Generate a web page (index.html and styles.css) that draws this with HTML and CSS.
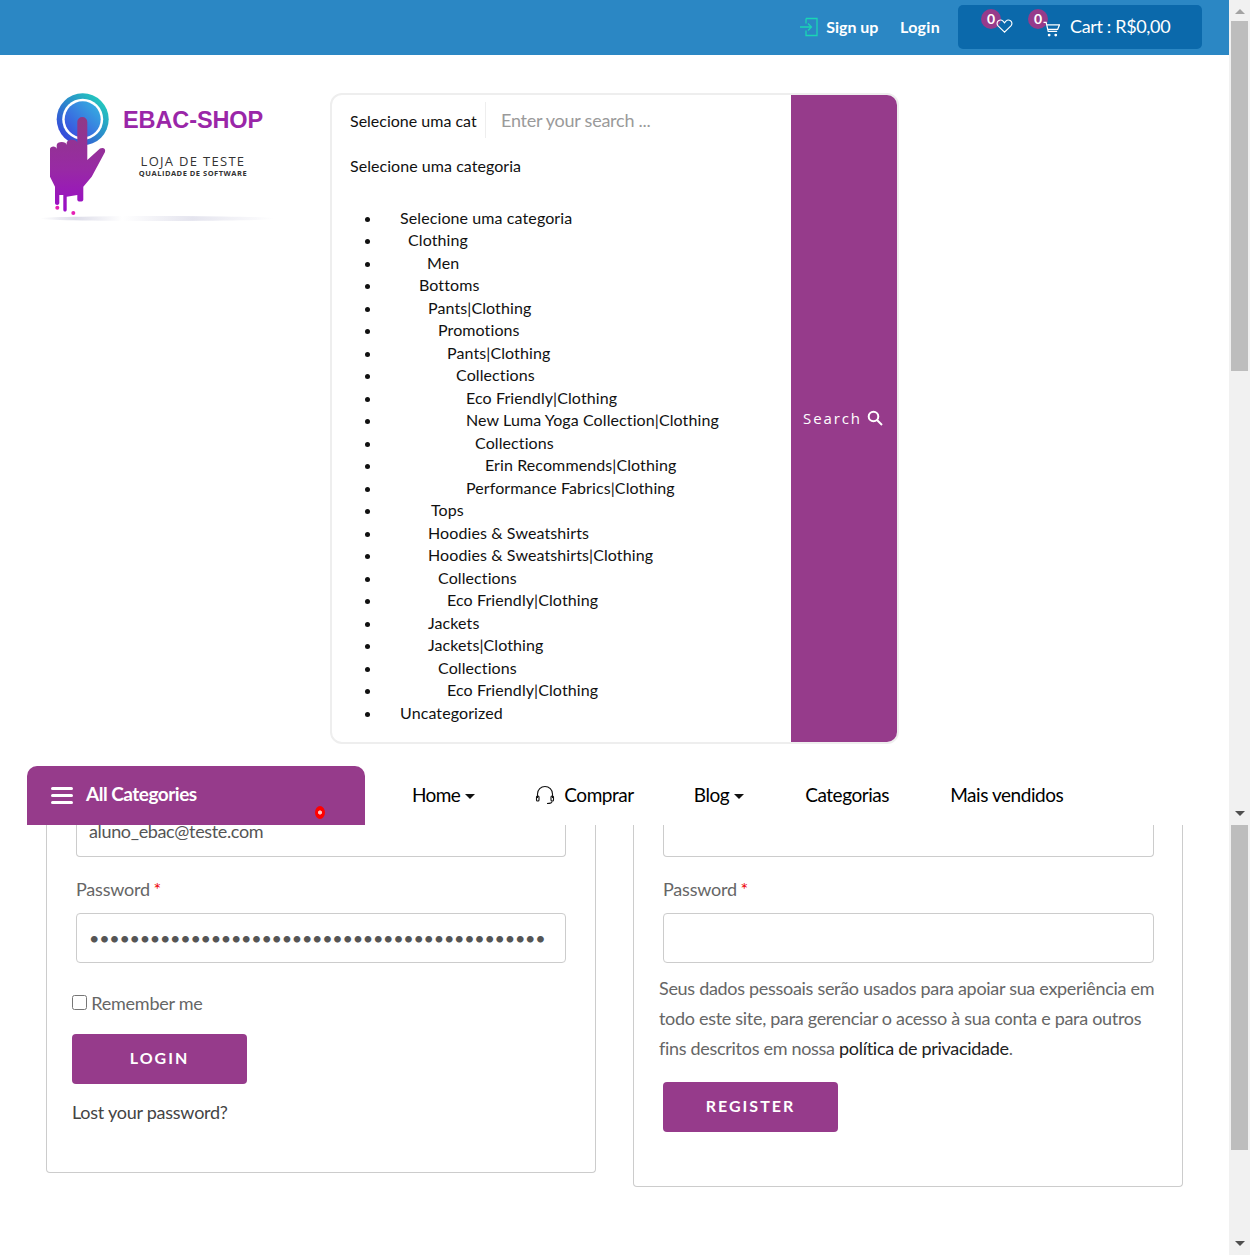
FILE: index.html
```html
<!DOCTYPE html>
<html lang="pt-BR">
<head>
<meta charset="utf-8">
<title>EBAC Shop</title>
<link rel="stylesheet" href="styles.css">
</head>
<body>
<div class="frame">
  <header class="site-header">
    <div class="header-col">
      <div class="topbar">
        <a class="top-link signup">
          <svg class="signup-icon" viewBox="0 0 20 20" width="20" height="20" fill="none" stroke="#1ad6b4" stroke-width="1.3"><path d="M7 1.5h11v17H7v-5M7 6.5v-5M1 10h11M9 6.5l3.5 3.5L9 13.5"/></svg>
          Sign up</a>
        <a class="top-link login">Login</a>
        <div class="cart-box">
          <span class="icon-badge wish">
            <span class="badge">0</span>
            <svg viewBox="0 1 18 15" width="17" height="15" fill="none" stroke="#fff" stroke-width="1.2"><path d="M9 14.5L2.2 7.8C.6 6.1.9 3.6 2.6 2.4 4.3 1.3 6.2 1.6 7.5 2.9L9 4.6 10.5 2.9C11.8 1.6 13.700 1.300 15.400 2.400 17.100 3.600 17.400 6.100 15.800 7.800Z"/></svg>
          </span>
          <span class="icon-badge cart">
            <span class="badge">0</span>
            <svg viewBox="0 0 18 17" width="17" height="16" fill="none" stroke="#fff" stroke-width="1.3"><path d="M.5 1.5h2.8L5.500 11h9.500M4 4h13.500l-2 5H5"/><circle cx="6.500" cy="15" r="1.500" fill="#fff" stroke="none"/><circle cx="13.500" cy="15" r="1.500" fill="#fff" stroke="none"/></svg>
          </span>
          <span class="cart-text">Cart : R$0,00</span>
        </div>
      </div>

      <div class="brand-row">
        <a class="logo">
          <svg class="logo-mark" viewBox="0 0 70 126" width="70" height="126">
            <defs>
              <linearGradient id="ring" x1="0" y1="1" x2="1" y2="0"><stop offset="0" stop-color="#3a2fe0"/><stop offset="1" stop-color="#1fe0b8"/></linearGradient>
              <linearGradient id="disc" x1="0" y1="1" x2="1" y2="0"><stop offset="0" stop-color="#3b45e0"/><stop offset="1" stop-color="#35b8e0"/></linearGradient>
              <linearGradient id="hand" x1="0" y1="0" x2="0" y2="1"><stop offset="0" stop-color="#8f3a85"/><stop offset="0.55" stop-color="#982aa4"/><stop offset="1" stop-color="#9a0cc8"/></linearGradient>
            </defs>
            <circle cx="36.700" cy="26.300" r="26" fill="url(#ring)"/>
            <circle cx="36.700" cy="26.300" r="20.500" fill="#fff"/>
            <circle cx="36.700" cy="26.300" r="18" fill="url(#disc)"/>
            <path d="M31.300 29a5 5 0 0 1 10 0V67L54 55.500c3-1.500 6 0 5 3.500L45.700 83.700 37.300 93.700v13c0 2.500-6 2.500-6 0V102L20.700 103.700v13c0 2.500-3.400 2.500-3.400 0V102h-4v8c0 2.500-4.300 2.500-4.300 0V93.700L4 83.700V56c0-3.500 6.700-3.500 6.700 0V52c0-4 10-4 10 0V50c0-4.500 10.600-4.500 10.600 0Z" fill="url(#hand)"/>
            <circle cx="11.300" cy="114.700" r="2" fill="#e61fb4"/>
            <circle cx="27.300" cy="120" r="2" fill="#e61fb4"/>
          </svg>
          <div class="logo-text">
            <div class="logo-title">EBAC-SHOP</div>
            <div class="logo-sub">LOJA DE TESTE</div>
            <div class="logo-small">QUALIDADE DE SOFTWARE</div>
          </div>
          <span class="logo-shadow"></span>
        </a>

        <form class="search">
          <div class="search-main">
            <div class="search-top">
              <span class="cat-select">Selecione uma cat</span>
              <span class="search-input">Enter your search ...</span>
            </div>
            <div class="cat-current">Selecione uma categoria</div>
            <ul class="cat-list">
              <li><span class="d0">Selecione uma categoria</span></li>
              <li><span class="d1">Clothing</span></li>
              <li><span class="d2">Men</span></li>
              <li><span class="d3">Bottoms</span></li>
              <li><span class="d4">Pants|Clothing</span></li>
              <li><span class="d5">Promotions</span></li>
              <li><span class="d6">Pants|Clothing</span></li>
              <li><span class="d7">Collections</span></li>
              <li><span class="d8">Eco Friendly|Clothing</span></li>
              <li><span class="d8">New Luma Yoga Collection|Clothing</span></li>
              <li><span class="d9">Collections</span></li>
              <li><span class="d10">Erin Recommends|Clothing</span></li>
              <li><span class="d8">Performance Fabrics|Clothing</span></li>
              <li><span class="d3b">Tops</span></li>
              <li><span class="d4">Hoodies &amp; Sweatshirts</span></li>
              <li><span class="d4">Hoodies &amp; Sweatshirts|Clothing</span></li>
              <li><span class="d5">Collections</span></li>
              <li><span class="d6">Eco Friendly|Clothing</span></li>
              <li><span class="d4">Jackets</span></li>
              <li><span class="d4">Jackets|Clothing</span></li>
              <li><span class="d5">Collections</span></li>
              <li><span class="d6">Eco Friendly|Clothing</span></li>
              <li><span class="d0">Uncategorized</span></li>
            </ul>
          </div>
          <button class="search-btn" type="button">Search
            <svg viewBox="0 0 16 16" width="16" height="16" fill="none" stroke="#fff" stroke-width="2"><circle cx="6.500" cy="6.500" r="4.800"/><path d="M10 10l5 5"/></svg>
          </button>
        </form>
      </div>

      <nav class="navbar">
        <a class="all-cats">
          <span class="burger"><i></i><i></i><i></i></span>
          All Categories
          <span class="red-dot"></span>
        </a>
        <ul class="nav-links">
          <li class="home">Home<span class="caret"></span></li>
          <li class="with-icon">
            <svg viewBox="0 0 20 20" width="20" height="20" fill="none" stroke="#111" stroke-width="1.100"><path d="M2.500 13V9a7.500 7.500 0 0 1 15 0v4"/><rect x="1.500" y="11" width="2.500" height="5" rx="1"/><rect x="16" y="11" width="2.500" height="5" rx="1"/><path d="M17 16.500c0 1.500-2 2-5 2"/></svg>
            Comprar</li>
          <li>Blog<span class="caret"></span></li>
          <li>Categorias</li>
          <li>Mais vendidos</li>
        </ul>
      </nav>
    </div>
    <div class="scrollbar">
      <span class="arrow up"></span>
      <span class="thumb thumb-upper"></span>
      <span class="arrow down"></span>
    </div>
  </header>

  <div class="page-body">
    <main class="account">
      <section class="card card-login">
        <div class="field-value email">aluno_ebac@teste.com</div>
        <label class="field-label">Password <b>*</b></label>
        <div class="field-value dots">•••••••••••••••••••••••••••••••••••••••••••••</div>
        <label class="remember"><input type="checkbox"> Remember me</label>
        <button class="cta" type="button">LOGIN</button>
        <a class="lost">Lost your password?</a>
      </section>
      <section class="card card-register">
        <div class="field-value email"></div>
        <label class="field-label">Password <b>*</b></label>
        <div class="field-value"></div>
        <p class="privacy">Seus dados pessoais serão usados para apoiar sua experiência em todo este site, para gerenciar o acesso à sua conta e para outros fins descritos em nossa <a>política de privacidade</a>.</p>
        <button class="cta" type="button">REGISTER</button>
      </section>
    </main>
    <div class="scrollbar lower">
      <span class="thumb thumb-lower"></span>
      <span class="arrow down"></span>
    </div>
  </div>
</div>
</body>
</html>
```
FILE: styles.css
```css
* { box-sizing: border-box; }
html, body { margin: 0; padding: 0; height: 100%; overflow: hidden; background: #fff; }
body { font-family: Lato, sans-serif; color: #222; font-size: 16px; }
a { color: inherit; text-decoration: none; }
.frame { width: 1250px; height: 1255px; display: flex; flex-direction: column; }

.site-header { height: 825px; display: flex; position: relative; z-index: 2; }
.header-col { width: 1229px; display: flex; flex-direction: column; }

.scrollbar { width: 21px; background: #f1f1f1; display: flex; flex-direction: column; align-items: center; }
.thumb { display: block; width: 17px; background: #bdbdbd; }
.thumb-upper { height: 350px; margin-top: 7px; }
.thumb-lower { height: 325px; }
.arrow { display: block; width: 0; height: 0; border-left: 5px solid transparent; border-right: 5px solid transparent; }
.arrow.up { border-bottom: 5px solid #a3a3a3; margin-top: 9px; }
.arrow.down { border-top: 5px solid #505050; margin-top: auto; margin-bottom: 9px; }

.topbar { height: 55px; background: #2b87c4; display: flex; align-items: flex-start; justify-content: flex-end; padding: 5px 27px 0 0; color: #fff; flex: none; }
.top-link { font-weight: 700; font-size: 16px; height: 44px; display: flex; align-items: center; padding-bottom: 2px; }
.signup-icon { margin: 2px 7px 0 0; }
.login { margin-left: 21.500px; margin-right: 18px; letter-spacing: 0.3px; }
.cart-box { width: 244px; height: 44px; background: #0b69ab; border-radius: 5px; display: flex; align-items: flex-start; padding-left: 38px; }
.icon-badge { position: relative; display: block; line-height: 0; }
.icon-badge svg { position: relative; z-index: 2; }
.icon-badge.wish { margin-top: 14px; }
.icon-badge.cart { margin-left: 30px; margin-top: 16px; }
.badge { position: absolute; width: 20px; height: 20px; border-radius: 50%; background: #963b8b; color: #fff; font-size: 14px; font-weight: 700; line-height: 20px; text-align: center; left: -15px; top: -10px; z-index: 1; }
.icon-badge.cart .badge { left: -15px; top: -12px; }
.cart-text { font-size: 18px; margin-left: 10px; letter-spacing: -0.35px; align-self: center; padding-bottom: 2px; }

.brand-row { display: flex; align-items: flex-start; flex: none; height: 711px; }
.logo { position: relative; display: flex; width: 330px; padding: 38px 0 0 46px; flex: none; }
.logo-mark { width: 70px; height: 126px; flex: none; }
.logo-text { margin-left: 7px; margin-top: 13px; text-align: center; width: 140px; white-space: nowrap; }
.logo-title { font-family: "Liberation Sans", Arial, sans-serif; font-weight: 700; font-size: 23.500px; line-height: 28px; color: #9a26a8; letter-spacing: -0.1px; }
.logo-sub { font-family: "Open Sans", sans-serif; font-weight: 500; font-size: 13px; line-height: 14px; margin-top: 20px; color: #333; letter-spacing: 1.300px; }
.logo-small { font-family: "Open Sans", sans-serif; font-weight: 700; font-size: 7.500px; line-height: 10px; color: #333; letter-spacing: .5px; }
.logo-shadow { position: absolute; left: 40px; top: 161px; width: 235px; height: 5px; border-radius: 50%; background: linear-gradient(90deg, transparent, #dcdce8 15%, transparent 35%, #e4e4ee 65%, transparent); }

.search { width: 569px; height: 651px; margin-top: 38px; border: 2px solid #eee; border-radius: 12px; display: flex; overflow: hidden; background: #fff; }
.search-main { width: 459px; flex: none; color: #111; }
.search-top { display: flex; height: 36px; margin-top: 7px; align-items: center; }
.cat-select { width: 154px; height: 36px; border-right: 1px solid #eee; padding: 1px 0 0 18px; font-size: 16px; line-height: 36px; white-space: nowrap; overflow: hidden; }
.search-input { padding-left: 15px; font-size: 18px; color: #9a9a9a; letter-spacing: -0.25px; }
.cat-current { font-size: 16px; margin: 18px 0 0 18px; line-height: 20px; letter-spacing: 0.05px; }
.cat-list { margin: 30.500px 0 0 0; padding: 0 0 0 50px; list-style: disc; font-size: 16px; line-height: 22.500px; letter-spacing: 0.1px; }
.cat-list li { padding-left: 18px; white-space: pre; }
.cat-list span { display: inline-block; }
.d1 { margin-left: 8px; } .d2 { margin-left: 27px; } .d3 { margin-left: 19px; } .d3b { margin-left: 31px; }
.d4 { margin-left: 28px; } .d5 { margin-left: 38px; } .d6 { margin-left: 47px; } .d7 { margin-left: 56px; }
.d8 { margin-left: 66px; } .d9 { margin-left: 75px; } .d10 { margin-left: 85px; }
.search-btn { width: 106px; background: #963b8b; color: #fff; border: 0; font: 15px "Open Sans", sans-serif; letter-spacing: 1.900px; display: flex; align-items: center; justify-content: center; gap: 5px; padding: 0 2px 2px 0; }

.navbar { display: flex; align-items: flex-end; padding-left: 27px; height: 59px; flex: none; }
.all-cats { position: relative; width: 338px; height: 59px; background: #963b8b; border-radius: 10px 10px 0 0; color: #fff; font-weight: 700; font-size: 19px; letter-spacing: -0.5px; display: flex; align-items: center; padding: 0 0 4px 24px; flex: none; }
.burger { display: flex; flex-direction: column; gap: 4px; margin: 4px 13px 0 0; }
.burger i { display: block; width: 22px; height: 3px; border-radius: 2px; background: #fff; }
.red-dot { position: absolute; left: 288px; top: 40px; width: 10px; height: 13px; border-radius: 50%; background: radial-gradient(circle, #ffc0c0 0 20%, #ff0000 30%); }
.nav-links { list-style: none; margin: 0; padding: 0 0 2px 47px; display: flex; gap: 61px; height: 59px; align-items: center; font-size: 19px; color: #000; letter-spacing: -0.45px; }
.nav-links li { display: flex; align-items: center; white-space: nowrap; }
.home { letter-spacing: -0.6px; }
.with-icon { margin: 0 -1px 0 -1px; }
.with-icon svg { margin-right: 9px; }
.caret { display: inline-block; width: 0; height: 0; border-left: 5px solid transparent; border-right: 5px solid transparent; border-top: 5px solid #111; margin-left: 5px; margin-top: 3px; }

.page-body { height: 430px; display: flex; }
.account { width: 1229px; display: flex; align-items: flex-start; padding-left: 46px; gap: 37px; overflow: hidden; color: #666; }
.card { width: 550px; border: 1px solid #ccc; border-top: 0; border-radius: 0 0 4px 4px; font-size: 18px; letter-spacing: -0.2px; flex: none; padding-left: 29px; }
.card-login { height: 348px; }
.card-register { height: 362px; }
.field-value { width: 490px; height: 50px; border: 1px solid #ccc; border-radius: 4px; padding-left: 12px; line-height: 48px; color: #555; }
.card-register .field-value { width: 491px; }
.field-value.email { height: 32px; border-top: 0; border-radius: 0 0 4px 4px; line-height: 12px; letter-spacing: -0.35px; }
.field-label { display: block; line-height: 24px; margin: 20px 0 12px; }
.field-label b { color: #e00; font-weight: 400; margin-left: -1px; }
.dots { letter-spacing: -0.3px; overflow: hidden; white-space: nowrap; }
.remember { display: block; margin: 27px 0 0 -4px; line-height: 26px; letter-spacing: -0.25px; }
.remember input { width: 15px; height: 15px; margin: 0; vertical-align: 0; }
.cta { display: block; width: 175px; height: 50px; background: #963b8b; color: #fff; border: 0; border-radius: 4px; font: 700 16px Lato, sans-serif; letter-spacing: 2px; padding: 0 0 4px; margin: 18px 0 0 -4px; }
.lost { display: block; margin: 15px 0 0 -4px; color: #444; line-height: 26px; letter-spacing: -0.25px; }
.privacy { margin: 10px 0 0 -4px; width: 500px; line-height: 30px; letter-spacing: -0.3px; }
.privacy a { color: #222; }
.card-register .cta { margin: 19px 0 0 0; }
```
